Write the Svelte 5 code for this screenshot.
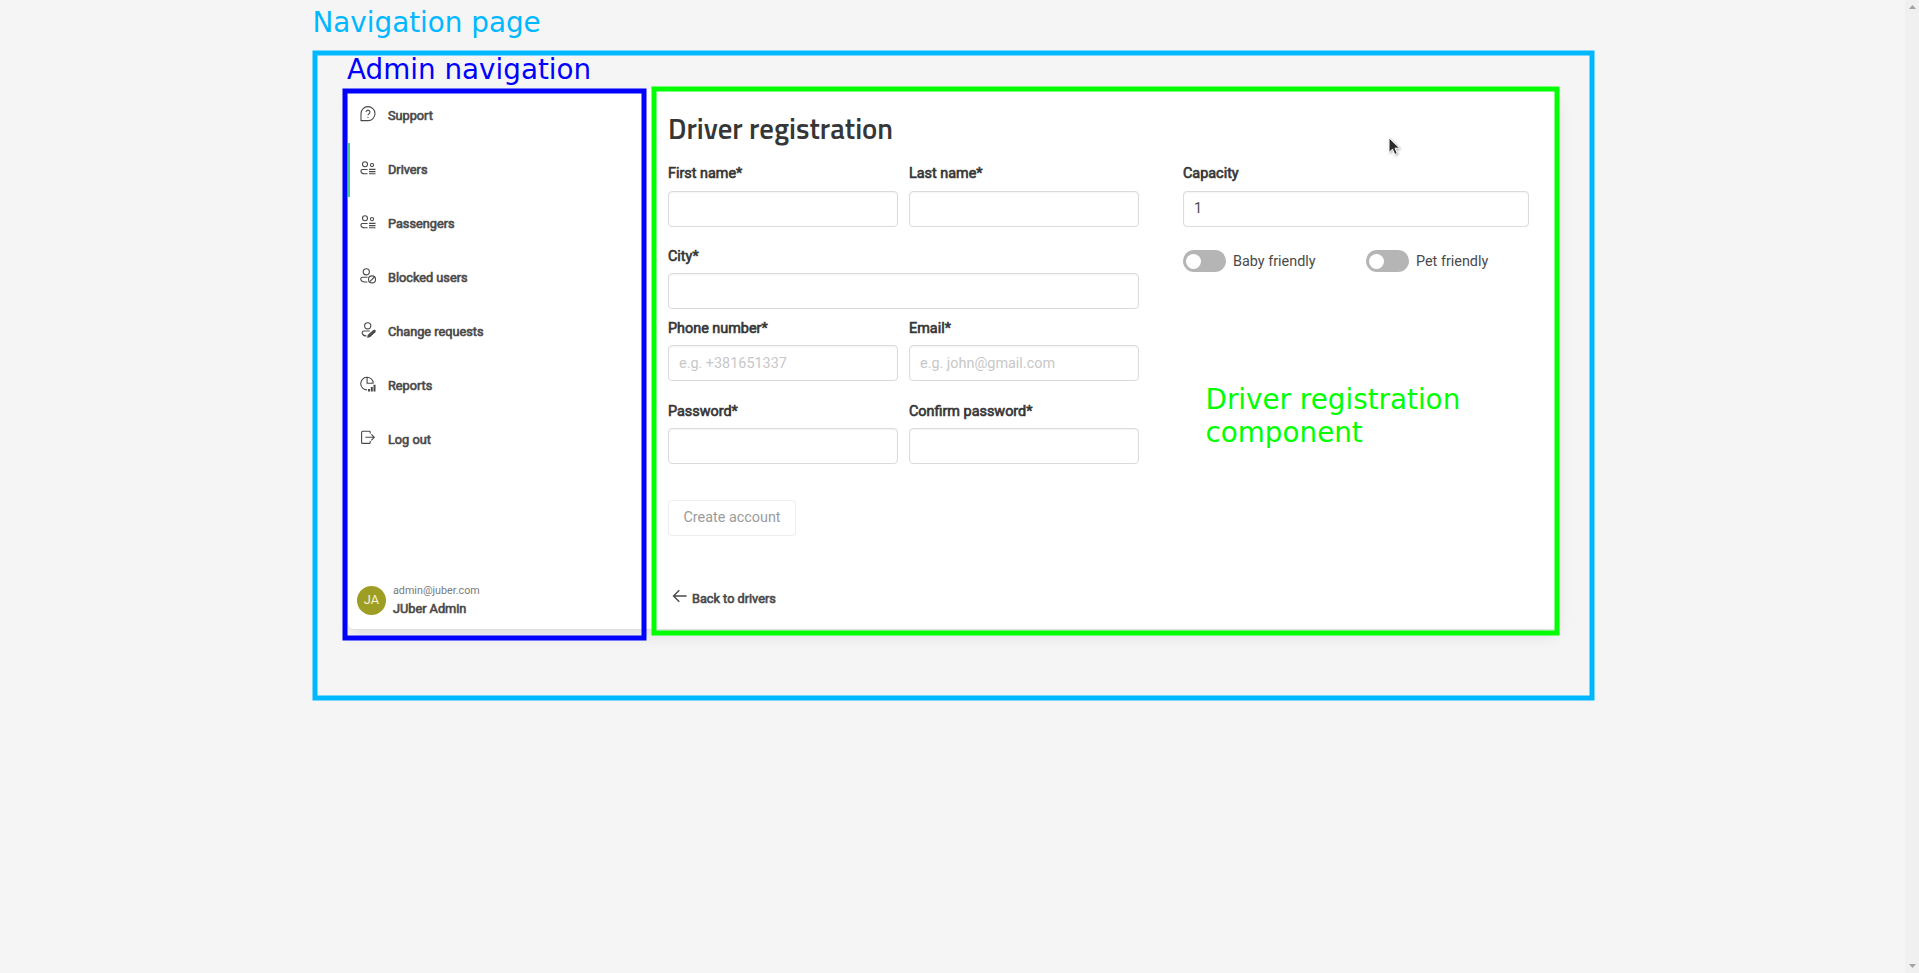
<script>
  const nav = [
    { icon: 'support', label: 'Support' },
    { icon: 'users', label: 'Drivers', active: true },
    { icon: 'users', label: 'Passengers' },
    { icon: 'blocked', label: 'Blocked users' },
    { icon: 'change', label: 'Change requests' },
    { icon: 'reports', label: 'Reports' },
    { icon: 'logout', label: 'Log out' }
  ];
  const toggles = ['Baby friendly', 'Pet friendly'];
</script>

{#snippet field(id, label, type, placeholder)}
  <div class="field">
    <label for={id}>{label}</label>
    <input {id} {type} {placeholder} />
  </div>
{/snippet}

{#snippet glyph(name)}
  <svg class="icon" viewBox="0 0 16 16" width="16" height="16">
    {#if name === 'support'}
      <path d="M1 14.6V7.8A7 7 0 1 1 8 14.6Z" />
      <path d="M6.1 6.1a1.9 1.9 0 1 1 2.9 1.6c-.7.45-1 .8-1 1.6M8 10.9v1.2" />
    {:else if name === 'users'}
      <circle cx="5" cy="4.3" r="2.5" />
      <circle cx="12" cy="5.1" r="1.6" />
      <path d="M7.6 9.5H2.3C.2 9.5.1 13.8 4.5 13.8h3.1M9 9.4h6.5M9 11.6h6.5M9 13.8h6.5" />
    {:else if name === 'blocked'}
      <circle cx="6.3" cy="3.8" r="3.1" />
      <path d="M7.6 9.2H2.6C-.4 9.2 .2 14 4.8 14h2.6" />
      <circle cx="12" cy="11.4" r="3.5" />
      <path d="M9.6 13.8l4.8-4.8" />
    {:else if name === 'change'}
      <circle cx="7.7" cy="3.8" r="3.1" />
      <path d="M9.8 9H4c-3 0-2.4 5 2.6 5" />
      <path class="solid" d="M7.2 15.9l.6-3.1 5.6-4.8c1.6-1 3.2.8 1.9 2.2l-5 4.7Z" />
    {:else if name === 'reports'}
      <path d="M13.3 7.2A6.3 6.3 0 1 0 7.1 13.9M7.1 1.2v6h6.2" />
      <path class="bar" d="M9 13v2.6M11.8 11v4.6M14.5 8.8v6.8" />
    {:else if name === 'logout'}
      <path d="M10.2 3.5V2.1Q10.2 1.2 9.2 1.2H2.6Q1.6 1.2 1.6 2.2v10.2q0 1 1 1h6.6q1 0 1-1v-1.4M5.4 7.3h8.8M11.3 4.3l3 3-3 3" />
    {/if}
  </svg>
{/snippet}

<div class="page">
  <main class="card">
    <nav>
      <ul>
        {#each nav as item}
          <li class:active={item.active}>
            {@render glyph(item.icon)}
            <span>{item.label}</span>
          </li>
        {/each}
      </ul>
      <div class="user">
        <div class="avatar">JA</div>
        <div class="who">
          <span class="mail">admin@juber.com</span>
          <span class="name">JUber Admin</span>
        </div>
      </div>
    </nav>
    <section>
      <h1>Driver registration</h1>
      <div class="columns">
        <div class="account">
          <div class="pair">
            {@render field('first', 'First name*', 'text', '')}
            {@render field('last', 'Last name*', 'text', '')}
          </div>
          <div class="city low">{@render field('city', 'City*', 'text', '')}</div>
          <div class="pair low">
            {@render field('phone', 'Phone number*', 'text', 'e.g. +381651337')}
            {@render field('email', 'Email*', 'text', 'e.g. john@gmail.com')}
          </div>
          <div class="pair low secret">
            {@render field('password', 'Password*', 'password', '')}
            {@render field('confirm', 'Confirm password*', 'password', '')}
          </div>
          <button disabled>Create account</button>
        </div>
        <div class="vehicle">
          <div class="field">
            <label for="capacity">Capacity</label>
            <input id="capacity" class="number" value="1" />
          </div>
          <div class="toggles">
            {#each toggles as label}
              <div class="toggle"><span class="track"></span><span>{label}</span></div>
            {/each}
          </div>
        </div>
      </div>
      <div class="back">
        <svg class="icon arrow" viewBox="0 0 16 14" width="16" height="14"><path d="M14.6 7H1.6M7.3 1.2L1.5 7l5.8 5.8" /></svg>
        <span>Back to drivers</span>
      </div>
    </section>
  </main>
  <aside class="scrollbar">
    <svg width="7" height="4" viewBox="0 0 7 4"><path d="M3.5 0L7 4H0Z" /></svg>
    <svg width="7" height="4" viewBox="0 0 7 4"><path d="M3.5 4L7 0H0Z" /></svg>
  </aside>

  <svg class="frames" width="1919" height="973">
    <rect x="315" y="53" width="1277" height="645" stroke="#00b8ff" />
    <rect x="345" y="91" width="299" height="547" stroke="#0000ff" />
    <rect x="654" y="89" width="903" height="544" stroke="#00ff00" />
  </svg>
  <div class="note note-page">Navigation page</div>
  <div class="note note-nav">Admin navigation</div>
  <div class="note note-form">Driver registration<br />component</div>
  <svg class="pointer" width="14" height="20" viewBox="0 0 14 20"><path d="M1 .8v14.7l3.5-3.3 2.3 5.3 2.5-1.1L7 11.2h4.6Z" /></svg>
</div>

<style>
  :global(body) { overflow: hidden; }
  .page, .page * { box-sizing: border-box; }
  .page {
    position: relative;
    display: flex;
    justify-content: space-between;
    width: 1919px;
    height: 973px;
    padding: 89px 0 0 348px;
    background: #f5f5f5;
    font-family: Roboto, sans-serif;
    font-size: 14.4px;
    color: #4a4a4a;
  }
  .card {
    display: flex;
    width: 1210px;
    height: 540px;
    background: #fff;
    border-radius: 6px;
    box-shadow: 0 8px 16px -2px rgba(10, 10, 10, 0.1), 0 0 0 1px rgba(10, 10, 10, 0.02);
  }
  nav {
    display: flex;
    flex-direction: column;
    justify-content: space-between;
    width: 304px;
  }
  ul { list-style: none; margin: 0; padding: 0; }
  li {
    display: flex;
    align-items: center;
    gap: 12px;
    height: 54px;
    padding-left: 12px;
    line-height: 18px;
  }
  li.active { border-left: 2px solid #48c78e; padding-left: 10px; }
  li span, .name, .back span { font-size: 12.72px; -webkit-text-stroke: 0.65px currentColor; }
  .icon { fill: none; stroke: #4a4a4a; stroke-width: 1.1; flex: none; }
  li .icon { margin-top: -5px; }
  .icon .solid { fill: #4a4a4a; stroke: none; }
  .icon .bar { stroke-width: 2; }
  .user { display: flex; gap: 7px; padding: 0 0 11px 9px; align-items: center; }
  .avatar {
    width: 29px;
    height: 29px;
    border-radius: 50%;
    background: #9e9d24;
    color: #f5f5dc;
    font-size: 12.8px;
    line-height: 28px;
    text-align: center;
  }
  .who { display: flex; flex-direction: column; }
  .mail { font-size: 10.75px; line-height: 18px; color: #7a7a7a; }
  .name { line-height: 18px; }
  section { flex: 1; padding: 19px 29px 0 16px; }
  h1 {
    margin: 0;
    font: 600 28.8px/40px "Titillium Web", "Noto Sans", sans-serif;
    color: #363636;
    white-space: nowrap;
  }
  .columns { display: flex; gap: 44px; padding-top: 15px; }
  .account { display: flex; flex-direction: column; align-items: stretch; width: 471px; }
  .pair { display: grid; grid-template-columns: 1fr 1fr; gap: 11px; margin-bottom: 10px; }
  .pair .field, .vehicle .field { height: 72px; }
  .city { height: 72px; }
  .low .field { padding-top: 1px; gap: 6px; }
  .low.secret { padding-top: 1px; margin-bottom: 0; }
  .field { display: flex; flex-direction: column; gap: 7px; }
  label { height: 21px; line-height: 21px; color: #363636; -webkit-text-stroke: 0.65px currentColor; }
  input {
    width: 100%;
    height: 36px;
    padding: 0 10px;
    border: 1px solid #dbdbdb;
    border-radius: 4px;
    background: #fff;
    box-shadow: inset 0 1px 2px rgba(10, 10, 10, 0.05);
    font: 14.4px/20px Roboto, sans-serif;
    color: #4a4a4a;
    outline: none;
  }
  input::placeholder { color: #c7c7c7; opacity: 1; }
  .number { padding-bottom: 1px; }
  button {
    width: 128px;
    height: 36px;
    margin-top: 28px;
    padding: 0;
    border: 1px solid #ededed;
    border-radius: 4px;
    background: #fff;
    font: 14.4px/20px Roboto, sans-serif;
    color: #9b9b9b;
  }
  .vehicle { width: 346px; }
  .toggles { display: grid; grid-template-columns: 183px 1fr; padding-top: 15px; }
  .toggle { display: flex; align-items: center; gap: 7px; height: 22px; }
  .track {
    display: flex;
    align-items: center;
    width: 43px;
    height: 22px;
    padding-left: 3px;
    border-radius: 11px;
    background: #b5b5b5;
  }
  .track::before { content: ""; width: 15px; height: 15px; border-radius: 50%; background: #fff; }
  .back { display: flex; align-items: center; gap: 4px; margin-top: 54px; padding-left: 4px; line-height: 18px; }
  .arrow { margin-top: -7px; stroke-width: 1.4; }
  .scrollbar {
    display: flex;
    flex-direction: column;
    align-items: center;
    justify-content: space-between;
    width: 14px;
    height: 973px;
    margin-top: -89px;
    padding: 5px 0;
    background: #f0f0f0;
  }
  .scrollbar path { fill: #a3a3a3; }
  .frames { position: absolute; left: 0; top: 0; fill: none; stroke-width: 5; pointer-events: none; }
  .note { position: absolute; font: 27.8px/33px "DejaVu Sans", sans-serif; white-space: nowrap; }
  .note-page { left: 312.5px; top: 6px; color: #00b8ff; }
  .note-nav { left: 347px; top: 53px; color: #00f; }
  .note-form { left: 1205.5px; top: 383px; color: #0f0; }
  .pointer { position: absolute; left: 1387.5px; top: 137px; filter: drop-shadow(1px 1px 1px rgba(0, 0, 0, 0.3)); }
  .pointer path { fill: #2c2c2c; stroke: #fff; stroke-width: 1; }
</style>
